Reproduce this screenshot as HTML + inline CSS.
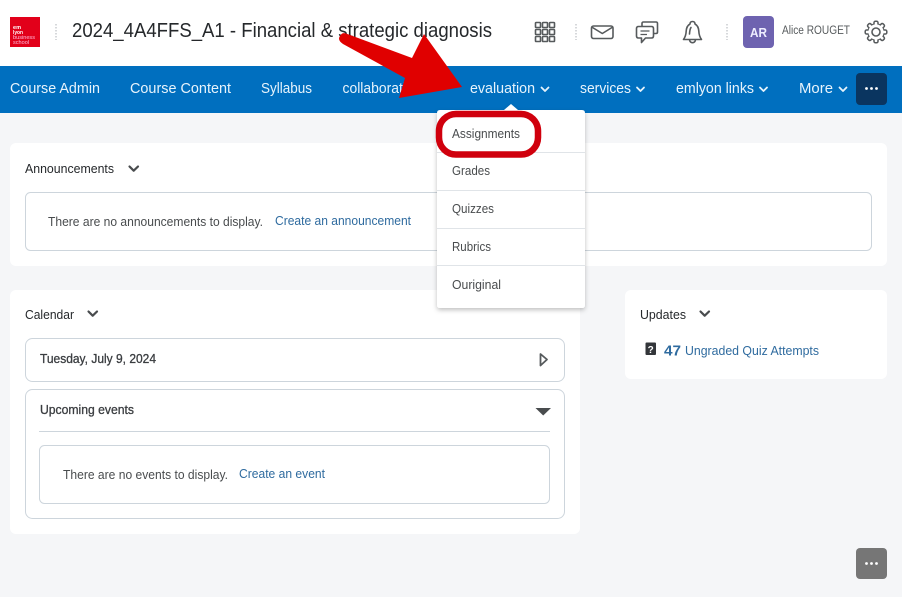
<!DOCTYPE html>
<html lang="en"><head><meta charset="utf-8"><title>2024_4A4FFS_A1</title>
<style>
html,body{margin:0;padding:0;width:902px;height:597px;overflow:hidden;background:#f5f6f8}
svg{display:block}
text{font-family:"Liberation Sans",sans-serif;font-size:13px;fill:#494c4e}
.nav{font-size:14.5px;fill:#e6f3fc}
.card{fill:#fff}
.box{fill:#fff;stroke:#cdd5dc;stroke-width:1}
.ic{fill:none;stroke:#565a5c;stroke-width:1.6;stroke-linejoin:round;stroke-linecap:round}
.chev{fill:none;stroke:#e6f3fc;stroke-width:1.8;stroke-linecap:round;stroke-linejoin:round}
.chevd{fill:none;stroke:#494c4e;stroke-width:2.2;stroke-linecap:round;stroke-linejoin:round}
.lk{fill:#2f6b9f}
.dk{fill:#25282b}
.semi{font-size:12.5px;fill:#3a3d40;stroke:#3a3d40;stroke-width:.3}
.mi{fill:#494c4e;font-size:12.5px}
.sep{stroke:#cdd5dc;stroke-width:1}
</style></head><body>
<svg width="902" height="597" viewBox="0 0 902 597" xmlns="http://www.w3.org/2000/svg">
<defs><filter id="s" x="-20%" y="-20%" width="140%" height="140%"><feDropShadow dx="0" dy="2" stdDeviation="2.5" flood-color="#000" flood-opacity=".25"/></filter></defs>
<rect width="902" height="597" fill="#f5f6f8"/>
<rect width="902" height="66" fill="#fff"/>
<rect y="66" width="902" height="47" fill="#006fbf"/>

<!-- logo -->
<rect x="10" y="17" width="30" height="30" fill="#e2001a"/>
<text x="13" y="29" textLength="8" lengthAdjust="spacingAndGlyphs" style="font-size:5px;font-weight:700;fill:#fff">em</text>
<text x="13" y="34" textLength="10" lengthAdjust="spacingAndGlyphs" style="font-size:5px;font-weight:700;fill:#fff">lyon</text>
<text x="13" y="39" textLength="22" lengthAdjust="spacingAndGlyphs" style="font-size:5px;fill:#fbd">business</text>
<text x="13" y="44" textLength="16" lengthAdjust="spacingAndGlyphs" style="font-size:5px;fill:#fbd">school</text>
<line x1="56" y1="24" x2="56" y2="40" stroke="#c9cccf" stroke-width="1.5" stroke-dasharray="1.5 1.5"/>

<text x="72" y="37" textLength="420" lengthAdjust="spacingAndGlyphs" style="font-size:20px;fill:#25282b">2024_4A4FFS_A1 - Financial &amp; strategic diagnosis</text>

<!-- header icons -->
<g fill="none" stroke="#565a5c" stroke-width="1.6">
<rect x="535.5" y="22.5" width="5" height="5" rx=".8"/><rect x="542.5" y="22.5" width="5" height="5" rx=".8"/><rect x="549.5" y="22.5" width="5" height="5" rx=".8"/>
<rect x="535.5" y="29.5" width="5" height="5" rx=".8"/><rect x="542.5" y="29.5" width="5" height="5" rx=".8"/><rect x="549.5" y="29.5" width="5" height="5" rx=".8"/>
<rect x="535.5" y="36.5" width="5" height="5" rx=".8"/><rect x="542.5" y="36.5" width="5" height="5" rx=".8"/><rect x="549.5" y="36.5" width="5" height="5" rx=".8"/>
</g>
<line x1="576" y1="24" x2="576" y2="40" stroke="#c9cccf" stroke-width="1.5" stroke-dasharray="1.5 1.5"/>
<rect class="ic" x="591.5" y="26" width="21.5" height="12.5" rx="2"/>
<path class="ic" d="M592.5 27.5 L602.3 33.5 L612 27.5"/>
<path class="ic" d="M642 26 V23.5 Q642 22 643.5 22 H656 Q657.5 22 657.5 23.5 V32 Q657.5 33.5 656 33.5 H654"/>
<path class="ic" d="M638.5 26.5 H651.5 Q653.5 26.5 653.5 28.5 V36 Q653.5 38 651.5 38 H645.5 L641.5 42.5 V38 H638.5 Q636.5 38 636.5 36 V28.5 Q636.5 26.5 638.5 26.5 Z"/>
<path d="M640.5 31 H649.5 M640.5 34.500 H647" stroke="#565a5c" stroke-width="1.2" fill="none"/>
<path class="ic" d="M692.5 21.5 Q695 21.5 695 24 Q698.5 26 698.8 31 Q699 36 701.5 39.5 H683.5 Q686 36 686.2 31 Q686.5 26 690 24 Q690 21.5 692.5 21.5 Z"/>
<path class="ic" d="M689.5 39.8 Q690 42.7 692.5 42.7 Q695 42.7 695.5 39.8 M689.5 34 Q689.8 29 691 27.5"/>
<line x1="727" y1="24" x2="727" y2="40" stroke="#c9cccf" stroke-width="1.5" stroke-dasharray="1.5 1.5"/>
<rect x="743" y="16" width="31" height="32" rx="4" fill="#6e63b0"/>
<text x="758.5" y="37" text-anchor="middle" textLength="17" lengthAdjust="spacingAndGlyphs" style="font-size:13px;font-weight:700;fill:#eef">AR</text>
<text x="782" y="34" textLength="68" lengthAdjust="spacingAndGlyphs" style="font-size:11.5px;fill:#565a5c">Alice ROUGET</text>
<!-- gear: ring of 8 rounded teeth over a valley circle -->
<g transform="translate(876 32)">
<circle r="8" fill="#fff" stroke="#565a5c" stroke-width="1.5"/>
<g fill="#fff" stroke="#565a5c" stroke-width="1.5">
<rect x="-2" y="-10.8" width="4" height="21.6" rx="1.4"/>
<rect x="-2" y="-10.8" width="4" height="21.6" rx="1.4" transform="rotate(45)"/>
<rect x="-2" y="-10.8" width="4" height="21.6" rx="1.4" transform="rotate(90)"/>
<rect x="-2" y="-10.8" width="4" height="21.6" rx="1.4" transform="rotate(135)"/>
</g>
<circle r="7.6" fill="#fff"/>
<circle r="4" fill="none" stroke="#565a5c" stroke-width="1.6"/>
</g>

<!-- nav -->
<text class="nav" x="10" y="93" textLength="90" lengthAdjust="spacingAndGlyphs">Course Admin</text>
<text class="nav" x="130" y="93" textLength="101" lengthAdjust="spacingAndGlyphs">Course Content</text>
<text class="nav" x="261" y="93" textLength="51" lengthAdjust="spacingAndGlyphs">Syllabus</text>
<text class="nav" x="342.5" y="93" textLength="79" lengthAdjust="spacingAndGlyphs">collaboration</text>
<text class="nav" x="470" y="93" textLength="65" lengthAdjust="spacingAndGlyphs">evaluation</text>
<path class="chev" d="M541.5 87.5 L545 91 L548.5 87.5"/>
<text class="nav" x="580" y="93" textLength="51" lengthAdjust="spacingAndGlyphs">services</text>
<path class="chev" d="M637 87.5 L640.5 91 L644 87.5"/>
<text class="nav" x="676" y="93" textLength="78" lengthAdjust="spacingAndGlyphs">emlyon links</text>
<path class="chev" d="M760 87.5 L763.5 91 L767 87.5"/>
<text class="nav" x="799" y="93" textLength="34" lengthAdjust="spacingAndGlyphs">More</text>
<path class="chev" d="M839.5 87.5 L843 91 L846.5 87.5"/>
<rect x="856" y="73" width="31" height="32" rx="4" fill="#0a3560"/>
<circle cx="866.5" cy="88.5" r="1.4" fill="#fff"/><circle cx="871.5" cy="88.5" r="1.4" fill="#fff"/><circle cx="876.5" cy="88.5" r="1.4" fill="#fff"/>

<!-- announcements -->
<rect class="card" x="10" y="143" width="877" height="123" rx="6"/>
<text class="dk" x="25" y="173" textLength="89" lengthAdjust="spacingAndGlyphs">Announcements</text>
<path class="chevd" d="M129.5 166.5 L133.7 170.7 L138 166.5"/>
<rect class="box" x="25.5" y="192.5" width="846" height="58" rx="5"/>
<text x="48" y="226" textLength="215" lengthAdjust="spacingAndGlyphs">There are no announcements to display.</text>
<text class="lk" x="275" y="225" textLength="136" lengthAdjust="spacingAndGlyphs">Create an announcement</text>

<!-- calendar -->
<rect class="card" x="10" y="290" width="570" height="244" rx="6"/>
<text class="dk" x="25" y="319" textLength="49" lengthAdjust="spacingAndGlyphs">Calendar</text>
<path class="chevd" d="M88.5 311.5 L92.7 315.7 L97 311.5"/>
<rect class="box" x="25.5" y="338.5" width="539" height="43" rx="7"/>
<text class="semi" x="40" y="363" textLength="116" lengthAdjust="spacingAndGlyphs">Tuesday, July 9, 2024</text>
<path d="M540.5 354 L547 359.5 L540.5 365.5 Z" fill="none" stroke="#565a5c" stroke-width="1.8" stroke-linejoin="round"/>
<rect class="box" x="25.5" y="389.5" width="539" height="129" rx="7"/>
<text class="semi" x="40" y="414" textLength="94" lengthAdjust="spacingAndGlyphs">Upcoming events</text>
<path d="M535.5 408 H551 L543.2 415.5 Z" fill="#494c4e"/>
<line class="sep" x1="39" y1="431.5" x2="550" y2="431.5"/>
<rect class="box" x="39.5" y="445.5" width="510" height="58" rx="5"/>
<text x="63" y="479" textLength="165" lengthAdjust="spacingAndGlyphs">There are no events to display.</text>
<text class="lk" x="239" y="478" textLength="86" lengthAdjust="spacingAndGlyphs">Create an event</text>

<!-- updates -->
<rect class="card" x="625" y="290" width="262" height="89" rx="6"/>
<text class="dk" x="640" y="319" textLength="46" lengthAdjust="spacingAndGlyphs">Updates</text>
<path class="chevd" d="M700.5 311.5 L704.7 315.7 L709 311.5"/>
<rect x="645.5" y="342.5" width="10.5" height="12.5" rx="1" fill="#33363a"/>
<text x="650.7" y="353" text-anchor="middle" style="font-size:10px;font-weight:700;fill:#fff">?</text>
<text class="lk" x="664" y="355.5" textLength="17" lengthAdjust="spacingAndGlyphs" style="font-size:15px;font-weight:700">47</text>
<text class="lk" x="685" y="355" textLength="134" lengthAdjust="spacingAndGlyphs">Ungraded Quiz Attempts</text>

<!-- floating button -->
<rect x="856" y="548" width="31" height="31" rx="4" fill="#767676"/>
<circle cx="866.5" cy="563.5" r="1.4" fill="#fff"/><circle cx="871.5" cy="563.5" r="1.4" fill="#fff"/><circle cx="876.5" cy="563.5" r="1.4" fill="#fff"/>

<!-- dropdown -->
<g filter="url(#s)">
<path d="M440 110 H504 L511 104 L518 110 H582 Q585 110 585 113 V305 Q585 308 582 308 H440 Q437 308 437 305 V113 Q437 110 440 110 Z" fill="#fff"/>
</g>
<line class="sep" x1="437" y1="152.5" x2="585" y2="152.5" style="stroke:#e0e4e8"/>
<line class="sep" x1="437" y1="190.5" x2="585" y2="190.5" style="stroke:#e0e4e8"/>
<line class="sep" x1="437" y1="228.5" x2="585" y2="228.5" style="stroke:#e0e4e8"/>
<line class="sep" x1="437" y1="265.5" x2="585" y2="265.5" style="stroke:#e0e4e8"/>
<text class="mi" x="452" y="138" textLength="68" lengthAdjust="spacingAndGlyphs">Assignments</text>
<text class="mi" x="452" y="175" textLength="38" lengthAdjust="spacingAndGlyphs">Grades</text>
<text class="mi" x="452" y="213" textLength="42" lengthAdjust="spacingAndGlyphs">Quizzes</text>
<text class="mi" x="452" y="251" textLength="39" lengthAdjust="spacingAndGlyphs">Rubrics</text>
<text class="mi" x="452" y="289" textLength="49" lengthAdjust="spacingAndGlyphs">Ouriginal</text>

<!-- annotation -->
<rect x="439" y="114" width="99" height="40.5" rx="17" fill="none" stroke="#d0000d" stroke-width="6.5"/>
<path d="M346 33.5 L412 58 L424 34 L462 87 L399 98 L405 78 L343 44 Q337 40 340 36 Q342 32 346 33.5 Z" fill="#e00000"/>
</svg>
</body></html>
